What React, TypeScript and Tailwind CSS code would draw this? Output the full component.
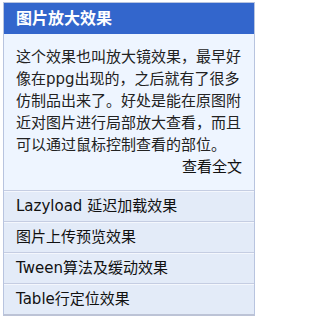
const links = ['Lazyload 延迟加载效果', '图片上传预览效果', 'Tween算法及缓动效果', 'Table行定位效果'];

export default function App() {
  return (
    <div
      className="min-h-screen bg-white pl-[3px] pt-[2px]"
      style={{ fontFamily: '"DejaVu Sans", "Noto Sans CJK SC", sans-serif' }}
    >
      <div className="w-[252px] border border-b-2 border-[#b8c4df] border-b-[#bcc3d6]">
        <div className="flex h-[31px] items-center bg-[#3366cc] pl-[12px] text-[16px] font-bold text-white">
          图片放大效果
        </div>
        <div className="bg-[#eef5ff] px-[12px] pt-[12px] pb-[12px] text-[15px] leading-[22px] text-[#222]">
          <p>这个效果也叫放大镜效果，最早好像在ppg出现的，之后就有了很多仿制品出来了。好处是能在原图附近对图片进行局部放大查看，而且可以通过鼠标控制查看的部位。</p>
          <p className="text-right text-[#111]">查看全文</p>
        </div>
        <ul className="bg-[#e3ebf8]">
          {links.map((t) => (
            <li
              key={t}
              className="flex h-[31px] items-center border-t border-[#c5cde2] pl-[12px] text-[15px] text-[#111] shadow-[inset_0_1px_0_#f4f7fd]"
            >
              {t}
            </li>
          ))}
        </ul>
      </div>
    </div>
  );
}
